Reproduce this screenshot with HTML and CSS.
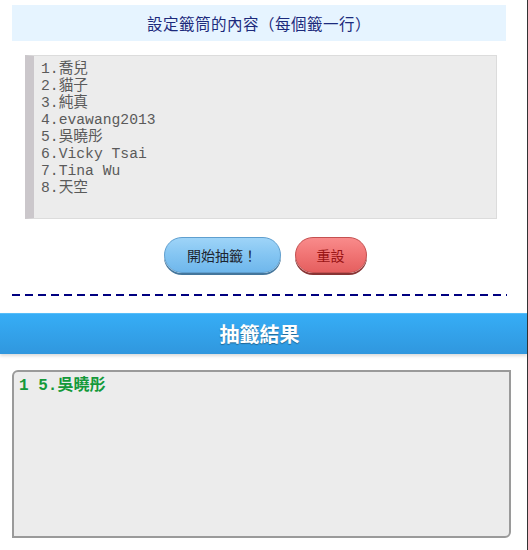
FILE: index.html
```html
<!DOCTYPE html>
<html lang="zh-Hant">
<head>
    <meta charset="UTF-8">
    <meta name="viewport" content="width=device-width, initial-scale=1.0">
    <title>抽籤</title>
    <link rel="stylesheet" href="styles.css">
</head>
<body>

    <div class="page">
        <div class="section">
            <h2 class="title">設定籤筒的內容（每個籤一行）</h2>

            <textarea id="lots" class="lots" spellcheck="false">1.喬兒
2.貓子
3.純真
4.evawang2013
5.吳曉彤
6.Vicky Tsai
7.Tina Wu
8.天空</textarea>

            <div class="actions">
                <button class="btn btn-draw">開始抽籤！</button>
                <button class="btn btn-reset">重設</button>
            </div>

            <div class="divider"></div>
        </div>

        <h2 class="result-bar">抽籤結果</h2>

        <div class="section">
            <div id="results" class="results">
                <p class="pick">1 5.吳曉彤</p>
            </div>
        </div>
    </div>

</body>
</html>
```

FILE: styles.css
```css
* {
    margin: 0;
    padding: 0;
    box-sizing: border-box;
}

body {
    background-color: white;
    font-family: 'Noto Sans CJK TC', 'Noto Sans', sans-serif;
}

.page {
    width: 528px;
    min-height: 550px;
    border-right: 1px solid #333;
    padding-top: 5px;
}

.section {
    padding: 0 21px 0 12px;
}

.title {
    height: 36px;
    line-height: 36px;
    background-color: #e6f4ff;
    color: #1c2a7c;
    font-size: 15.5px;
    font-weight: normal;
    text-align: center;
    letter-spacing: 0.5px;
}

.lots {
    display: block;
    width: 472px;
    height: 164px;
    margin: 14px 0 0 13px;
    padding: 5px 7px;
    background-color: #ececec;
    border: 1px solid #dcdcdc;
    border-left: 9px solid #cbc7cb;
    color: #5a5a5a;
    font-family: 'Liberation Mono', 'Noto Sans CJK TC', monospace;
    font-size: 14.7px;
    line-height: 17px;
    resize: none;
    outline: none;
}

.actions {
    display: flex;
    justify-content: center;
    gap: 14px;
    margin: 18px 0 0 12px;
    height: 38px;
}

.btn {
    height: 36px;
    border-radius: 18px;
    font-family: 'Noto Sans CJK TC', sans-serif;
    font-size: 14px;
    cursor: pointer;
}

.btn-draw {
    width: 117px;
    color: #1d2430;
    background: linear-gradient(#9ed4f8, #84c5f2 50%, #6fb7ec);
    border: 1px solid #5f9fcf;
    box-shadow: 0 2px 0 #44769c;
}

.btn-reset {
    width: 72px;
    color: #9a1414;
    background: linear-gradient(#f98b8b, #f07474 50%, #e55f5f);
    border: 1px solid #c45050;
    box-shadow: 0 2px 0 #883434;
}

.divider {
    height: 2px;
    margin-top: 19px;
    width: 495px;
    background: repeating-linear-gradient(to right, #000080 0 8px, transparent 8px 13px);
}

.result-bar {
    margin-top: 17px;
    height: 41px;
    line-height: 40px;
    background: linear-gradient(#36adf6, #3097de);
    border-top: 1px solid #55bdf9;
    box-shadow: 0 2px 3px rgba(0, 0, 0, 0.15);
    color: white;
    font-size: 20px;
    font-weight: bold;
    text-align: center;
    text-indent: -8px;
    text-shadow: 0 1px 1px rgba(0, 0, 0, 0.35);
}

.results {
    margin-top: 16px;
    width: 499px;
    height: 168px;
    background-color: #ececec;
    border: 2px solid #9a9a9a;
    border-radius: 6px 0 6px 0;
    padding: 4px 5px;
}

.pick {
    color: #14993a;
    font-family: 'Liberation Mono', 'Noto Sans CJK TC', monospace;
    font-size: 16px;
    font-weight: bold;
    line-height: 20px;
}
```
